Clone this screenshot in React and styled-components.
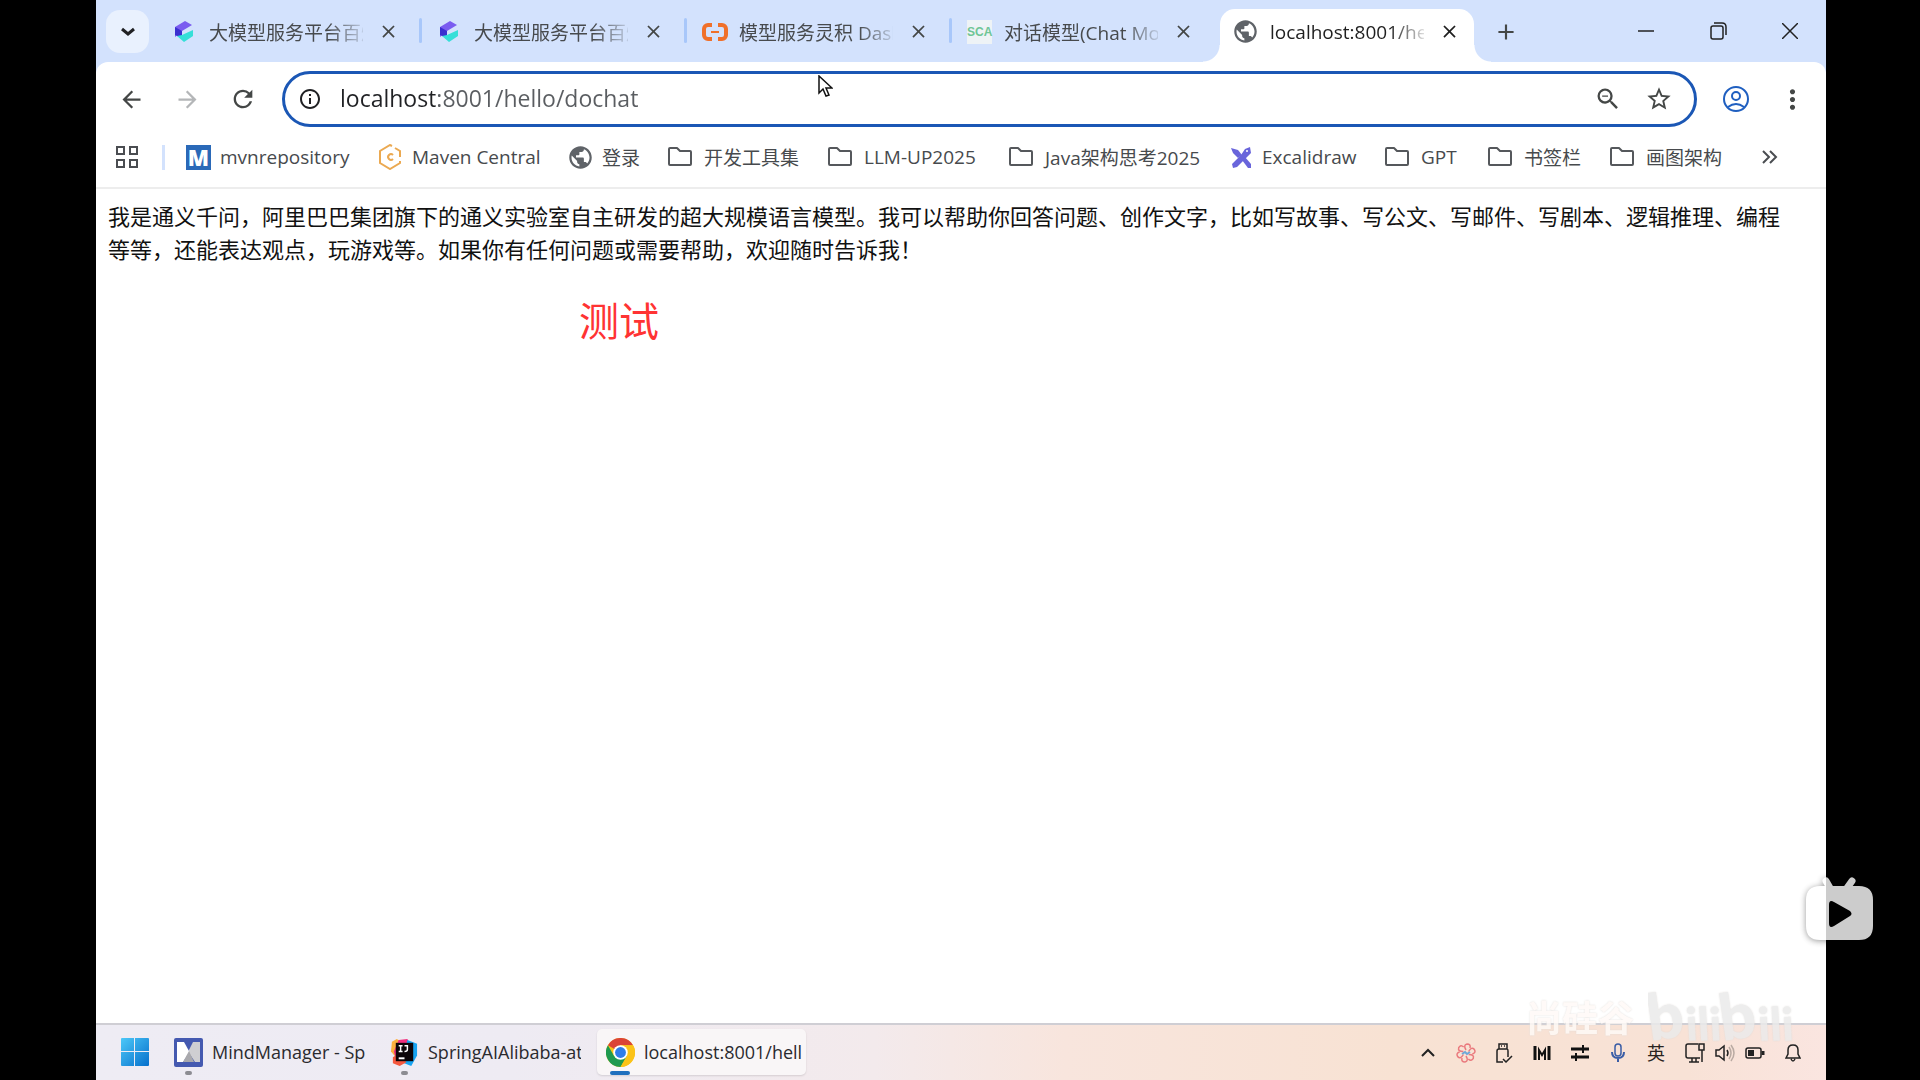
import styled, { createGlobalStyle, css } from "styled-components";
import {
    MdArrowBack, MdArrowForward, MdRefresh, MdInfoOutline, MdStarBorder, MdZoomOut,
    MdMoreVert, MdPublic, MdClose, MdAdd,
} from "react-icons/md";

const tabs = [
    { title: "大模型服务平台百炼", icon: "bailian", line: true },
    { title: "大模型服务平台百炼", icon: "bailian", line: true },
    { title: "模型服务灵积 DashScope", icon: "aliyun", line: true },
    { title: "对话模型(Chat Model)", icon: "sca" },
    { title: "localhost:8001/hello", icon: "globe", active: true },
]

const bookmarks = [
    { title: "mvnrepository", icon: "mvn", width: 192 },
    { title: "Maven Central", icon: "maven", width: 190 },
    { title: "登录", icon: "globe", width: 99 },
    { title: "开发工具集", icon: "folder", width: 160 },
    { title: "LLM-UP2025", icon: "folder", width: 181 },
    { title: "Java架构思考2025", icon: "folder", width: 220 },
    { title: "Excalidraw", icon: "excalidraw", width: 156 },
    { title: "GPT", icon: "folder", width: 103 },
    { title: "书签栏", icon: "folder", width: 122 },
    { title: "画图架构", icon: "folder", width: 145 },
]

const tasks = [
    { title: "MindManager - Spring", icon: "mind" },
    { title: "SpringAIAlibaba-atguigu", icon: "idea" },
    { title: "localhost:8001/hell", icon: "chrome", active: true },
]

const icons = {
    bailian: (
        <svg width="25" height="25" viewBox="0 0 25 25">
            <path d="M3 8 13 2l7 4-10 6-7 6z" fill="#7a5cf0" />
            <path d="M3 8l7 4v7l-7-3z" fill="#3a2fd0" />
            <path d="M5 17l5-1 11-5v6l-9 6z" fill="#35dfd8" />
        </svg>
    ),
    aliyun: (
        <svg width="26" height="20" viewBox="0 0 26 20" fill="none" stroke="#f0702a" strokeWidth="4">
            <path d="M10 3H6a4 4 0 0 0-4 4v6a4 4 0 0 0 4 4h4M16 3h4a4 4 0 0 1 4 4v6a4 4 0 0 1-4 4h-4" />
            <path d="M9 10h8" strokeWidth="2" />
        </svg>
    ),
    globe: <MdPublic size={27} color="#5f6368" />,
    folder: (
        <svg width="26" height="22" viewBox="0 0 26 22" fill="none" stroke="#55585c" strokeWidth="2" strokeLinejoin="round">
            <path d="M2 18V3q0-1 1-1h7l3 3h10q1 0 1 1v12q0 1-1 1H3q-1 0-1-1z" />
        </svg>
    ),
    maven: (
        <svg width="25" height="26" viewBox="0 0 25 26" fill="none" stroke="#eba951" strokeWidth="2">
            <path d="M14 2 12 1 2 7v12l10 6 10-6v-2M17 4l5 3v6" />
            <path d="M15 11q-2-2-4 0t0 4q2 2 4 0" strokeWidth="2" />
        </svg>
    ),
    excalidraw: (
        <svg width="24" height="24" viewBox="0 0 24 24" fill="#6965db">
            <path d="M2 3l7 2 4 5-4 3-5-5z" />
            <path d="M21 2l1 6-5 5-9 9-4 1-1-4 9-9 4-6z" />
            <path d="M13 15l3-3 6 7v4h-3z" />
            <circle cx="18" cy="6" r="1" fill="#fff" />
        </svg>
    ),
    mind: (
        <svg width="29" height="29" viewBox="0 0 29 29">
            <rect width="29" height="29" rx="2" fill="#4459b0" />
            <path d="M3 4h7l5 9v2l-6 9H3z" fill="#fff" />
            <path d="M26 4h-7l-4 8v3l6 9h5z" fill="#cfcfd2" />
            <path d="M15 13l5 11H9z" fill="#a9a9ad" />
        </svg>
    ),
    idea: (
        <svg width="29" height="29" viewBox="0 0 30 30">
            <path d="M2 4l5-3 9 5-10 14-5-6z" fill="#fdb13d" />
            <path d="M9 2l9-1 4 8-16 13-2-8z" fill="#f0307e" />
            <path d="M18 2l10 4v12l-6 11-10-4z" fill="#17a4f2" />
            <path d="M3 20l6-4 8 9-7 4-7-3z" fill="#f5583e" />
            <rect x="6" y="5" width="18" height="19" fill="#0c0508" />
            <path d="M9 8h4M11 8v6M9 14h4M15 8h3v4q0 2-3 2" fill="none" stroke="#fff" strokeWidth="1.5" />
            <path d="M9 21h6" stroke="#fff" strokeWidth="2" />
        </svg>
    ),
    chrome: (
        <svg width="29" height="29" viewBox="0 0 48 48">
            <circle cx="24" cy="24" r="24" fill="#fbc318" />
            <path d="M24 24 3.2 12A24 24 0 0 1 44.8 12H24z" fill="#db4437" />
            <path d="M3.2 12A24 24 0 0 0 24 48l10.4-18L24 24l-10.4 6z" fill="#1f9a50" />
            <path d="M44.8 12H24v12l10.4 6L24 48A24 24 0 0 0 44.8 12z" fill="#fbc318" />
            <circle cx="24" cy="24" r="12" fill="#fff" />
            <circle cx="24" cy="24" r="9" fill="#2f7de9" />
        </svg>
    ),
}

function SiteIcon({ name }) {
    if (name === "mvn") return <MvnIcon>M</MvnIcon>
    if (name === "sca") return <ScaIcon>SCA</ScaIcon>
    return icons[name]
}

function TabStrip() {
    return (
        <StyledTabStrip>
            <TabSearch aria-label="Search tabs">
                <svg width="14" height="10" viewBox="0 0 14 10" fill="none" stroke="#202124" strokeWidth="3">
                    <path d="M1 2l6 5 6-5" />
                </svg>
            </TabSearch>
            {tabs.map((tab, i) => (
                <Tab key={i} $active={tab.active} $line={tab.line}>
                    <IconBox><SiteIcon name={tab.icon} /></IconBox>
                    <TabTitle>{tab.title}</TabTitle>
                    <TabClose aria-label="Close tab"><MdClose size={21} /></TabClose>
                </Tab>
            ))}
            <NewTab aria-label="New tab"><MdAdd size={26} /></NewTab>
            <WindowControls>
                <WindowButton aria-label="Minimize">
                    <svg width="16" height="16" viewBox="0 0 16 16" stroke="#222" strokeWidth="1.5"><path d="M0 8h16" /></svg>
                </WindowButton>
                <WindowButton aria-label="Restore">
                    <svg width="17" height="18" viewBox="0 0 17 18" fill="none" stroke="#222" strokeWidth="1.5">
                        <rect x="1" y="4" width="12" height="13" rx="2" />
                        <path d="M4 1h8q4 0 4 4v8" />
                    </svg>
                </WindowButton>
                <WindowButton aria-label="Close">
                    <svg width="16" height="16" viewBox="0 0 16 16" stroke="#222" strokeWidth="1.5"><path d="M0 0l16 16M16 0 0 16" /></svg>
                </WindowButton>
            </WindowControls>
        </StyledTabStrip>
    )
}

function Toolbar() {
    return (
        <StyledToolbar>
            <ToolButton aria-label="Back"><MdArrowBack size={27} /></ToolButton>
            <ToolButton aria-label="Forward" disabled><MdArrowForward size={27} /></ToolButton>
            <ToolButton aria-label="Reload"><MdRefresh size={28} /></ToolButton>
            <Omnibox>
                <MdInfoOutline size={24} color="#202124" />
                <UrlInput aria-label="Address" defaultValue="localhost:8001/hello/dochat" spellCheck={false} />
                <OmniButton aria-label="Zoom"><MdZoomOut size={28} /></OmniButton>
                <OmniButton aria-label="Bookmark"><MdStarBorder size={28} /></OmniButton>
            </Omnibox>
            <ToolButton aria-label="Profile">
                <svg width="26" height="26" viewBox="0 0 26 26" fill="none" stroke="#1f5fc0" strokeWidth="2">
                    <circle cx="13" cy="13" r="12" />
                    <circle cx="13" cy="10" r="4" />
                    <path d="M5 21q8-6 16 0" />
                </svg>
            </ToolButton>
            <ToolButton aria-label="Menu"><MdMoreVert size={31} /></ToolButton>
        </StyledToolbar>
    )
}

function BookmarksBar() {
    return (
        <StyledBookmarks>
            <AppsButton aria-label="Apps">
                <svg width="23" height="22" viewBox="0 0 23 22" fill="none" stroke="#4a4d51" strokeWidth="2">
                    <rect x="1" y="1" width="7" height="7" />
                    <rect x="14" y="1" width="7" height="7" />
                    <rect x="1" y="14" width="7" height="7" />
                    <rect x="14" y="14" width="7" height="7" />
                </svg>
            </AppsButton>
            {bookmarks.map(item => (
                <Bookmark key={item.title} href="#" $width={item.width}>
                    <IconBox $tight={item.icon !== "folder"}><SiteIcon name={item.icon} /></IconBox>
                    {item.title}
                </Bookmark>
            ))}
            <MoreButton aria-label="More bookmarks">
                <svg width="16" height="14" viewBox="0 0 16 14" fill="none" stroke="#4a4d51" strokeWidth="2">
                    <path d="M1 1l6 6-6 6M8 1l6 6-6 6" />
                </svg>
            </MoreButton>
        </StyledBookmarks>
    )
}

function Tray() {
    return (
        <StyledTray>
            <TrayItem $width={38}>
                <svg width="14" height="9" viewBox="0 0 14 9" stroke="#222" strokeWidth="2"><path d="M1 8l6-6 6 6" /></svg>
            </TrayItem>
            <TrayItem $width={38}>
                <svg width="20" height="20" viewBox="0 0 20 20" stroke="#ea7a7e" strokeWidth="1.5">
                    {[0, 60, 120, 180, 240, 300].map(a => (
                        <path key={a} d="M10 7Q7 2 11 1q4 0 3 4" transform={`rotate(${a} 10 10)`} />
                    ))}
                    <path d="M6 11l3-2 2 2 3-2" stroke="#6fa8d8" strokeWidth="2" />
                </svg>
            </TrayItem>
            <TrayItem $width={38}>
                <svg width="18" height="20" viewBox="0 0 18 20" stroke="#222" strokeWidth="1.5">
                    <path d="M4 6V1h8v5M8 19H2V8q0-2 2-2h8q1 0 1 2v6M8 16l3 3 6-6M6 3h1M9 3h1" />
                </svg>
            </TrayItem>
            <TrayItem $width={38}>
                <svg width="18" height="14" viewBox="0 0 18 14" stroke="#111" strokeWidth="3">
                    <path d="M2 0v14M16 0v14" />
                    <path d="M6 14V4l3 5 3-5v10" strokeWidth="2" />
                </svg>
            </TrayItem>
            <TrayItem $width={38}>
                <svg width="18" height="16" viewBox="0 0 18 16" stroke="#111" strokeWidth="3">
                    <path d="M0 4h18M0 12h18" />
                    <path d="M12 0v8M5 8v8" strokeWidth="2" />
                </svg>
            </TrayItem>
            <TrayItem $width={38}>
                <svg width="14" height="20" viewBox="0 0 14 20" stroke="#3a5da6" strokeWidth="1.5">
                    <rect x="4" y="1" width="6" height="12" rx="3" />
                    <path d="M1 9q0 6 6 6t6-6M7 15v4" strokeWidth="2" />
                </svg>
            </TrayItem>
            <TrayItem $width={38}>英</TrayItem>
            <TrayItem $width={40}>
                <svg width="20" height="20" viewBox="0 0 20 20" stroke="#222" strokeWidth="1.5">
                    <path d="M13 1H3Q1 1 1 3v10q0 2 2 2h12M7 15v4M4 19h10M11 15v4M14 1h5v6h-5zM17 7v12" />
                </svg>
            </TrayItem>
            <TrayItem $width={20}>
                <svg width="20" height="18" viewBox="0 0 20 18" stroke="#222" strokeWidth="1.5">
                    <path d="M1 6v6h3l5 4V2L4 6zM12 6q2 3 0 6" />
                    <path d="M14 3q4 6 0 12M16 1q6 8 0 16" stroke="#b9aaa2" />
                </svg>
            </TrayItem>
            <TrayItem $width={40}>
                <svg width="20" height="12" viewBox="0 0 20 12" stroke="#222" strokeWidth="1.5">
                    <rect x="1" y="1" width="15" height="10" rx="2" />
                    <path d="M3 3h6v6H3z" fill="#222" stroke="none" />
                    <path d="M18 4v4" strokeWidth="3" />
                </svg>
            </TrayItem>
            <TrayItem $width={36}>
                <svg width="16" height="18" viewBox="0 0 16 18" stroke="#222" strokeWidth="1.5">
                    <path d="M1 14l2-4V6q0-5 5-5t5 5v4l2 4zM6 15q2 4 4 0" />
                </svg>
            </TrayItem>
        </StyledTray>
    )
}

export default function App() {
    return (
        <Screen>
            <GlobalStyle />
            <BrowserTop>
                <TabStrip />
                <Toolbar />
            </BrowserTop>
            <BookmarksBar />
            <Page>
                <Answer>
                    我是通义千问，阿里巴巴集团旗下的通义实验室自主研发的超大规模语言模型。我可以帮助你回答问题、创作文字，比如写故事、写公文、写邮件、写剧本、逻辑推理、编程等等，还能表达观点，玩游戏等。如果你有任何问题或需要帮助，欢迎随时告诉我！
                </Answer>
                <Note>测试</Note>
            </Page>
            <Taskbar>
                <StartButton aria-label="Start">
                    <svg width="28" height="28" viewBox="0 0 28 28">
                        <defs>
                            <linearGradient id="win" x1="0" y1="0" x2="1" y2="1">
                                <stop offset="0" stopColor="#4cc8f8" />
                                <stop offset="1" stopColor="#0670cc" />
                            </linearGradient>
                        </defs>
                        <path d="M0 1q0-1 1-1h12v13H0zM14 0h13q1 0 1 1v12H14zM0 14h13v14H1q-1 0-1-1zM14 14h14v13q0 1-1 1H14z" fill="url(#win)" />
                    </svg>
                </StartButton>
                {tasks.map(task => (
                    <Task key={task.title} $active={task.active}>
                        {icons[task.icon]}
                        <TaskTitle>{task.title}</TaskTitle>
                    </Task>
                ))}
                <Tray />
            </Taskbar>
            <Watermark>
                尚硅谷
                <svg width="146" height="60" viewBox="0 0 146 60" fill="#ebebeb" fontFamily="Lato, sans-serif" fontWeight="900">
                    <text x="2" y="55" rotate="-8 -3 -3 -3 -8 -3 -3 -3">
                        <tspan fontSize="64">b</tspan>
                        <tspan fontSize="46">ili</tspan>
                        <tspan fontSize="64">b</tspan>
                        <tspan fontSize="46">ili</tspan>
                    </text>
                </svg>
            </Watermark>
            <PlayBadge width="67" height="64" viewBox="0 0 67 64" fill="#fff">
                <path
                    fillRule="evenodd"
                    d="M14 9h39q14 0 14 14v26q0 14-14 14H14Q0 63 0 49V23Q0 9 14 9zM23 28v18q0 6 5 3l16-10q3-2 0-5L28 25q-5-3-5 3z"
                />
                <path d="M20 4l4 7M46 4l-5 7" stroke="#fff" strokeWidth="7" strokeLinecap="round" />
            </PlayBadge>
            <Pointer width="15" height="23" viewBox="0 0 15 23">
                <path d="M1 1v17l4-4 3 7 3-1-3-7h6z" fill="#fff" stroke="#111" strokeWidth="1.5" />
            </Pointer>
        </Screen>
    )
}

const GlobalStyle = createGlobalStyle`
    * { box-sizing: border-box; }
    body { margin: 0; background: #000; }
    button {
        border: 0;
        padding: 0;
        background: none;
        color: #444746;
        font: inherit;
        display: flex;
        align-items: center;
        justify-content: center;
    }
    svg { flex: none; }
`

const Screen = styled.div`
    position: relative;
    display: flex;
    flex-direction: column;
    min-height: 100vh;
    padding: 0 94px 0 96px;
    overflow: hidden;
    font-family: "Open Sans", "Noto Sans CJK SC", sans-serif;
    font-size: 19px;
    color: #474a4d;
`

const BrowserTop = styled.header`
    background: #d3e2fd;
`

const StyledTabStrip = styled.div`
    display: flex;
    height: 62px;
    padding-left: 10px;
`

const TabSearch = styled.button`
    width: 43px;
    height: 43px;
    margin: 10px 11px 0 0;
    border-radius: 14px;
    background: #e9f1fe;
`

const Tab = styled.div`
    position: relative;
    display: flex;
    align-items: center;
    width: 265px;
    height: 53px;
    margin-top: 9px;
    padding: 0 0 8px 12px;

    ${({ $line }) => $line && css`
        &::after {
            content: "";
            position: absolute;
            top: 9px;
            right: 3px;
            width: 3px;
            height: 25px;
            border-radius: 2px;
            background: #a8c7fa;
        }
    `}

    ${({ $active }) => $active && css`
        width: 254px;
        padding-left: 13px;
        border-radius: 15px 15px 0 0;
        background: #fff;
        color: #1f1f1f;

        button { color: #1f1f1f; }

        &::before, &::after {
            content: "";
            position: absolute;
            bottom: 0;
            width: 17px;
            height: 17px;
        }
        &::before {
            right: 100%;
            background: radial-gradient(circle at 0 0, transparent 16px, #fff 17px);
        }
        &::after {
            left: 100%;
            background: radial-gradient(circle at 100% 0, transparent 16px, #fff 17px);
        }
    `}
`

const IconBox = styled.span`
    display: flex;
    flex: none;
    align-items: center;
    justify-content: center;
    width: 25px;
    height: 25px;
    margin-right: ${({ $tight }) => $tight ? 9 : 12}px;
`

const TabTitle = styled.span`
    width: 154px;
    margin-right: 13px;
    overflow: hidden;
    white-space: nowrap;
    mask-image: linear-gradient(to right, #000 120px, transparent 160px);
`

const TabClose = styled.button`
    width: 24px;
    height: 24px;
`

const NewTab = styled.button`
    width: 44px;
    height: 44px;
    margin: 10px 0 0 10px;
`

const WindowControls = styled.div`
    display: flex;
    margin-left: auto;
`

const WindowButton = styled.button`
    width: 72px;
    height: 61px;
`

const StyledToolbar = styled.div`
    display: flex;
    align-items: center;
    height: 65px;
    padding: 9px 6px 0 7px;
    border-radius: 12px 12px 0 0;
    background: #fff;
`

const ToolButton = styled.button`
    flex: none;
    width: 56px;
    height: 56px;

    &:disabled { color: #b4b6b8; }
`

const Omnibox = styled.div`
    display: flex;
    flex: 1;
    align-items: center;
    height: 56px;
    margin: 0 11px;
    padding: 0 10px 0 13px;
    border: 3px solid #1b57b5;
    border-radius: 28px;
    background: #fff;
`

const UrlInput = styled.input`
    flex: 1;
    min-width: 0;
    height: 40px;
    margin: 0 0 2px 18px;
    padding: 0;
    border: 0;
    outline: 0;
    font-family: inherit;
    font-size: 23px;
    color: transparent;
    background: linear-gradient(to right, #202124 95px, #5a5d61 95px);
    background-clip: text;
`

const OmniButton = styled.button`
    width: 51px;
    height: 48px;
`

const StyledBookmarks = styled.nav`
    display: flex;
    align-items: center;
    height: 62px;
    padding-left: 20px;
    border-bottom: 2px solid #ededed;
    background: #fff;
    white-space: nowrap;
`

const AppsButton = styled.button`
    height: 25px;
    margin-right: 21px;
    padding-right: 23px;
    border-right: 3px solid #d3e2fd;
`

const Bookmark = styled.a`
    display: flex;
    flex: none;
    align-items: center;
    width: ${({ $width }) => $width}px;
    color: inherit;
    text-decoration: none;
`

const MoreButton = styled.button`
    width: 32px;
    height: 32px;
`

const MvnIcon = styled.span`
    width: 25px;
    height: 25px;
    background: #2a69b8;
    color: #fff;
    font-size: 22px;
    font-weight: 800;
    line-height: 25px;
    text-align: center;
`

const ScaIcon = styled.span`
    width: 25px;
    height: 24px;
    background: #eef3f6;
    color: #6fc596;
    font-family: "Liberation Sans Narrow", "Liberation Sans", sans-serif;
    font-size: 12px;
    font-weight: 700;
    line-height: 24px;
    text-align: center;
`

const Page = styled.main`
    flex: 1;
    padding: 10px 32px 0 12px;
    background: #fff;
`

const Answer = styled.p`
    margin: 0;
    font-family: "Noto Sans CJK SC", sans-serif;
    font-size: 22px;
    line-height: 33px;
    color: #111;
`

const Note = styled.p`
    margin: 34px 0 0 471px;
    font-family: "Noto Sans CJK SC", sans-serif;
    font-size: 40px;
    line-height: 40px;
    color: #ff3333;
`

const Taskbar = styled.footer`
    display: flex;
    height: 57px;
    padding-left: 14px;
    border-top: 2px solid #cfced4;
    background: linear-gradient(to right, #eeecf4, #eeebf3 24%, #f3eaec 45%, #f8e5dd 56%, #f8e2d3 75%, #f8e2d6 92%, #fae5e0);
`

const StartButton = styled.button`
    width: 50px;
    height: 54px;
    margin-right: 5px;
`

const Task = styled.button`
    position: relative;
    width: 209px;
    height: 46px;
    margin: 4px 7px 0 0;
    padding: 0 9px;
    border-radius: 5px;
    color: #2a2a2e;
    font-size: 18px;

    &::after {
        content: "";
        position: absolute;
        left: 20px;
        bottom: 0;
        width: 7px;
        height: 4px;
        border-radius: 2px;
        background: #8c8c92;
    }

    ${({ $active }) => $active && css`
        padding-right: 0;
        background: #f9f6f7;
        box-shadow: 0 1px 2px rgba(0, 0, 0, 0.12);

        &::after {
            left: 13px;
            width: 20px;
            background: #1f6fbe;
        }
    `}
`

const TaskTitle = styled.span`
    flex: 1;
    margin-left: 9px;
    overflow: hidden;
    text-align: left;
    white-space: nowrap;
`

const StyledTray = styled.div`
    display: flex;
    align-items: center;
    margin-left: auto;
    padding-right: 15px;
    color: #2a2320;
    font-size: 18px;
    line-height: 20px;

    svg { fill: none; }
`

const TrayItem = styled.span`
    display: flex;
    align-items: center;
    justify-content: center;
    width: ${({ $width }) => $width}px;
`

const Watermark = styled.div`
    position: absolute;
    right: 126px;
    bottom: 34px;
    display: flex;
    align-items: center;
    gap: 14px;
    font-family: "Noto Sans CJK SC", sans-serif;
    font-size: 36px;
    font-weight: 700;
    line-height: 40px;
    color: #fffaf7;
    text-shadow: 0 0 2px #dcd8d5;
    opacity: 0.85;
    pointer-events: none;
`

const PlayBadge = styled.svg`
    position: absolute;
    right: 47px;
    bottom: 139px;
    overflow: visible;
    opacity: 0.8;
    filter: drop-shadow(0 1px 3px rgba(0, 0, 0, 0.5));
`

const Pointer = styled.svg`
    position: absolute;
    top: 75px;
    left: 818px;
`
